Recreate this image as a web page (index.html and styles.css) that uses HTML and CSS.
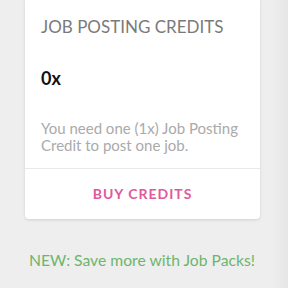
FILE: index.html
```html
<!DOCTYPE html>
<html>
<head>
<meta charset="utf-8">
<link rel="stylesheet" href="styles.css">
</head>
<body>
<div class="page">
  <div class="card">
    <div class="card-body">
      <h3 class="title">JOB POSTING CREDITS</h3>
      <div class="count">0x</div>
      <p class="desc">You need one (1x) Job Posting Credit to post one job.</p>
    </div>
    <div class="card-footer">
      <a class="buy">BUY CREDITS</a>
    </div>
  </div>
  <p class="promo">NEW: Save more with Job Packs!</p>
</div>
</body>
</html>
```
FILE: styles.css
```css
html, body {
  margin: 0;
  padding: 0;
}
body {
  width: 288px;
  height: 288px;
  overflow: hidden;
  background: linear-gradient(to right, #eeeeee 0, #eeeeee 272px, #e6e6e6 288px);
  font-family: Lato, "Open Sans", sans-serif;
}
.page {
  padding-left: 25px;
  width: 235px;
}
.card {
  margin-top: -4px;
  background: #fff;
  border-radius: 4px;
  box-shadow: 0 1px 3px rgba(0,0,0,0.12);
}
.card-body {
  padding: 20px 16px 14px 16px;
  border-bottom: 1px solid #e8e8e8;
}
.title {
  margin: 0;
  font-size: 17px;
  font-weight: 400;
  color: #7a7a7a;
  line-height: 21px;
}
.count {
  margin-top: 30px;
  font-size: 18px;
  font-weight: 700;
  color: #111;
  line-height: 22px;
}
.desc {
  margin: 31px 0 0 0;
  font-size: 15px;
  line-height: 17px;
  color: #aaa;
}
.card-footer {
  padding: 15px 0 16px;
  line-height: 18px;
  text-align: center;
}
.buy {
  font-size: 14px;
  font-weight: 700;
  letter-spacing: 1px;
  color: #e05a9b;
}
.promo {
  margin: 31px 0 0 4px;
  font-size: 15.7px;
  line-height: 20px;
  color: #6db56d;
}
```
